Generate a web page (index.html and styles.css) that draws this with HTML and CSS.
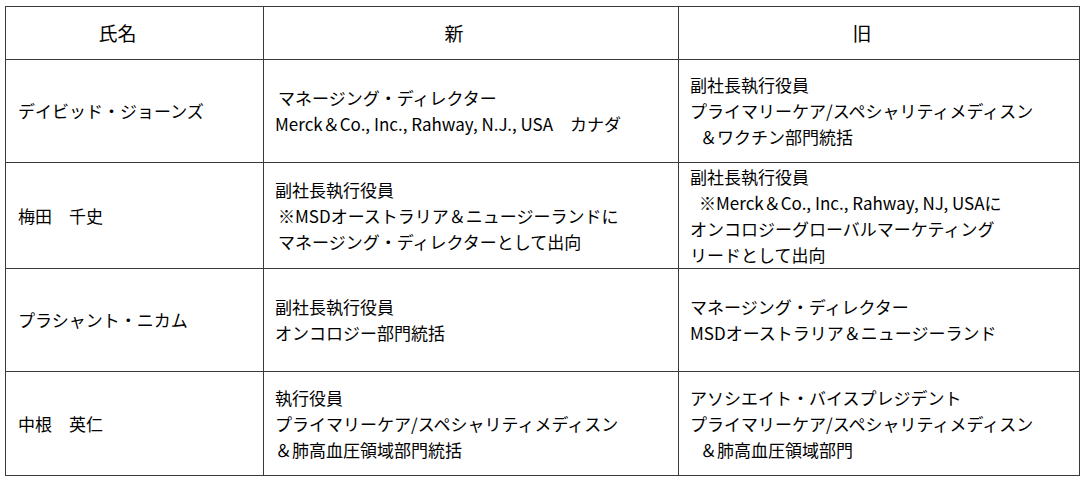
FILE: index.html
```html
<!DOCTYPE html>
<html lang="ja">
<head>
<meta charset="utf-8">
<link rel="stylesheet" href="styles.css">
</head>
<body>
<div class="wrap">
<table class="roster">
  <colgroup>
    <col class="c-name">
    <col class="c-new">
    <col class="c-old">
  </colgroup>
  <thead>
    <tr class="r-head">
      <th>氏名</th>
      <th>新</th>
      <th>旧</th>
    </tr>
  </thead>
  <tbody>
    <tr class="r1">
      <td class="name">デイビッド・ジョーンズ</td>
      <td><div class="ind1">マネージング・ディレクター</div><div>Merck＆Co., Inc., Rahway, N.J., USA　カナダ</div></td>
      <td><div>副社長執行役員</div><div>プライマリーケア/スペシャリティメディスン</div><div class="ind3">＆ワクチン部門統括</div></td>
    </tr>
    <tr class="r2">
      <td class="name">梅田　千史</td>
      <td><div>副社長執行役員</div><div class="ind1">※MSDオーストラリア＆ニュージーランドに</div><div class="ind1">マネージング・ディレクターとして出向</div></td>
      <td><div>副社長執行役員</div><div class="ind2">※Merck＆Co., Inc., Rahway, NJ, USAに</div><div>オンコロジーグローバルマーケティング</div><div>リードとして出向</div></td>
    </tr>
    <tr class="r3">
      <td class="name">プラシャント・ニカム</td>
      <td><div>副社長執行役員</div><div>オンコロジー部門統括</div></td>
      <td><div>マネージング・ディレクター</div><div>MSDオーストラリア＆ニュージーランド</div></td>
    </tr>
    <tr class="r4">
      <td class="name">中根　英仁</td>
      <td><div>執行役員</div><div>プライマリーケア/スペシャリティメディスン</div><div>＆肺高血圧領域部門統括</div></td>
      <td><div>アソシエイト・バイスプレジデント</div><div>プライマリーケア/スペシャリティメディスン</div><div class="ind3">＆肺高血圧領域部門</div></td>
    </tr>
  </tbody>
</table>
</div>
</body>
</html>
```

FILE: styles.css
```css
html, body {
  margin: 0;
  padding: 0;
  background: #ffffff;
}

.wrap {
  padding: 6px 0 0 5px;
}

.roster {
  border-collapse: collapse;
  table-layout: fixed;
  width: 1074px;
  font-family: "Noto Sans CJK JP", "Noto Sans", sans-serif;
  font-size: 17px;
  line-height: 26px;
  color: #000000;
}

.c-name { width: 258px; }
.c-new { width: 415px; }
.c-old { width: 401px; }

.roster th,
.roster td {
  border: 1px solid #3a3a3a;
  padding: 0 0 0 11px;
  vertical-align: middle;
  text-align: left;
  white-space: nowrap;
}

.roster th {
  font-weight: normal;
  font-size: 19px;
  text-align: center;
  padding: 0 34px 0 0;
}

.roster td.name {
  padding-left: 12px;
}

.r-head { height: 53px; }
.r1 { height: 103px; }
.r2 { height: 106px; }
.r3 { height: 103px; }
.r4 { height: 104px; }

.ind1 { padding-left: 3px; }
.ind2 { padding-left: 9px; }
.ind3 { padding-left: 10px; }
```
